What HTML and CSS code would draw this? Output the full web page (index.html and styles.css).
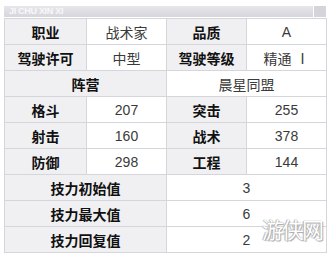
FILE: index.html
```html
<!DOCTYPE html>
<html lang="zh">
<head>
<meta charset="utf-8">
<link rel="stylesheet" href="styles.css">
</head>
<body>
<div class="wrap">
  <div class="bar">
    <div class="bar-title">JI CHU XIN XI</div>
    <div class="bar-end"></div>
  </div>
  <table class="info">
    <colgroup><col class="c1"><col class="c2"><col class="c3"><col class="c4"></colgroup>
    <tr><th>职业</th><td>战术家</td><th>品质</th><td>A</td></tr>
    <tr><th>驾驶许可</th><td>中型</td><th>驾驶等级</th><td>精通 Ⅰ</td></tr>
    <tr><th colspan="2">阵营</th><td colspan="2">晨星同盟</td></tr>
    <tr><th>格斗</th><td>207</td><th>突击</th><td>255</td></tr>
    <tr><th>射击</th><td>160</td><th>战术</th><td>378</td></tr>
    <tr><th>防御</th><td>298</td><th>工程</th><td>144</td></tr>
    <tr><th colspan="2">技力初始值</th><td colspan="2">3</td></tr>
    <tr><th colspan="2">技力最大值</th><td colspan="2">6</td></tr>
    <tr><th colspan="2">技力回复值</th><td colspan="2">2</td></tr>
  </table>
  <div class="mark">游侠网</div>
</div>
</body>
</html>
```
FILE: styles.css
```css
html, body {
  margin: 0;
  padding: 0;
  background: #ffffff;
}
.wrap {
  position: relative;
  width: 332px;
  height: 259px;
  padding: 6px 6px 0 4px;
  box-sizing: border-box;
  font-family: "Liberation Sans", Arial, "Noto Sans CJK SC", sans-serif;
}
.bar {
  display: flex;
  height: 11px;
  margin-bottom: 1px;
}
.bar-title {
  flex: 1;
  background: linear-gradient(#e6e6ea, #d6d6dc);
  color: #f8f8fa;
  font-size: 9px;
  line-height: 11px;
  padding-left: 5px;
  letter-spacing: -0.3px;
  font-weight: bold;
}
.bar-end {
  width: 12px;
  margin-left: 1px;
  background: #d4d4da;
}
.info {
  border-collapse: collapse;
  width: 322px;
  table-layout: fixed;
}
.c1 { width: 82px; }
.c2 { width: 80px; }
.c3 { width: 80px; }
.c4 { width: 80px; }
.info th, .info td {
  border: 1px solid #d5d5dc;
  height: 25px;
  padding: 0;
  text-align: center;
  font-size: 14px;
  font-family: "Liberation Sans", Arial, "Noto Sans CJK SC", sans-serif;
}
.info th {
  background: #f0f0f3;
  color: #111111;
  font-weight: bold;
}
.info td {
  background: #ffffff;
  color: #3a3a3a;
  font-weight: normal;
}
.mark {
  position: absolute;
  left: 262px;
  top: 212px;
  font-size: 22px;
  color: #ffffff;
  font-family: "Noto Sans CJK SC", sans-serif;
  text-shadow: 0 0 1px #999, 1px 1px 1px #aaa, -1px 0 1px #bbb;
  letter-spacing: -2px;
}
```
